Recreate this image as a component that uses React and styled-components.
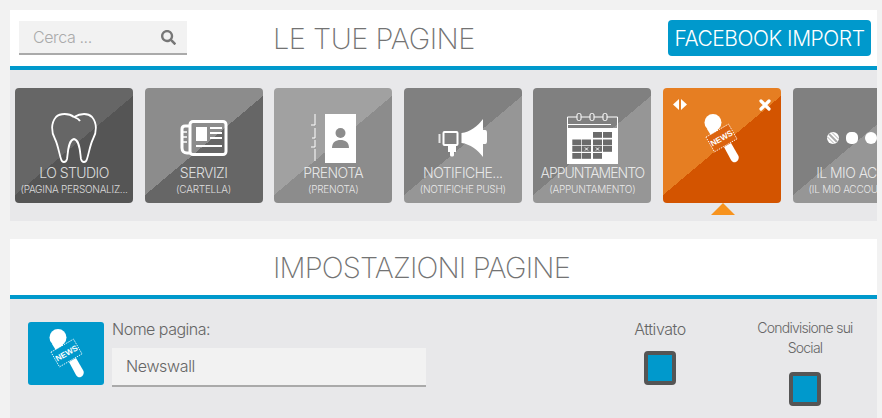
import React from "react";
import styled, { createGlobalStyle } from "styled-components";
import { FaSearch } from "react-icons/fa";

const GlobalStyle = createGlobalStyle`
    html, body {
        margin: 0;
        height: 418px;
        overflow: hidden;
        background: #f2f2f2;
        font-family: Inter, "Liberation Sans", sans-serif;
    }
`;

const Page = styled.div`
    display: flex;
    flex-direction: column;
    gap: 18px;
    padding: 10px 5px 0 10px;
`;
const Panel = styled.section`
    display: flex;
    flex-direction: column;
    min-width: 0;
`;
const Header = styled.header`
    display: flex;
    align-items: center;
    height: 56px;
    padding: 0 6px 0 ${(p) => p.$inset || 9}px;
    background: #fff;
    border-bottom: 4px solid #0099cc;
`;
const Title = styled.h1`
    margin: 0;
    font-size: 29px;
    font-weight: 200;
    letter-spacing: ${(p) => (p.$tight ? -0.85 : -0.5)}px;
    color: #737373;
    white-space: nowrap;
`;
const SearchBox = styled.div`
    display: flex;
    align-items: center;
    width: 143px;
    height: 32px;
    margin-right: 86px;
    padding: 0 11px 0 14px;
    background: #f2f2f2;
    border-bottom: 2px solid #aaa;
    color: #777;
`;
const SearchInput = styled.input`
    flex: 1;
    min-width: 0;
    border: 0;
    padding: 0;
    background: transparent;
    font: 300 16px Inter, "Liberation Sans", sans-serif;
    letter-spacing: -0.4px;
    &::placeholder {
        color: #aaa;
        opacity: 1;
    }
`;
const ImportButton = styled.button`
    margin-left: auto;
    width: 203px;
    height: 36px;
    padding: 0;
    border: 0;
    border-radius: 4px;
    background: #0099cc;
    color: #fff;
    font: 300 21px Inter, "Liberation Sans", sans-serif;
    letter-spacing: -0.45px;
    white-space: nowrap;
`;
const Strip = styled.div`
    display: flex;
    gap: 11.6px;
    height: 151px;
    box-sizing: border-box;
    padding: 18px 0 0 5px;
    background: #e8e8ea;
    overflow: hidden;
`;
const Tile = styled.div`
    position: relative;
    flex: 0 0 118px;
    height: 115px;
    display: flex;
    flex-direction: column;
    align-items: center;
    border-radius: 4px;
    background: linear-gradient(
        140deg,
        ${(p) => p.$from} 50%,
        ${(p) => p.$to} 50%
    );
    color: rgba(255, 255, 255, 0.8);
    white-space: nowrap;
    &::after {
        content: ${(p) => (p.$active ? '""' : "none")};
        position: absolute;
        left: 48px;
        top: 115px;
        border: solid transparent;
        border-width: 0 12px 12px;
        border-bottom-color: #f7931e;
    }
`;
const IconSlot = styled.div`
    height: 50px;
    margin-top: 25px;
    display: flex;
    align-items: center;
    justify-content: center;
    color: #fff;
`;
const TileName = styled.div`
    margin-top: 1px;
    font-size: 14px;
    font-weight: 300;
    line-height: 18px;
    letter-spacing: ${(p) => (p.$tight ? "-1" : "-0.55")}px;
`;
const TileSub = styled.div`
    font-size: 10px;
    font-weight: 300;
    line-height: 14px;
    letter-spacing: -0.25px;
`;
const TileAction = styled.span`
    position: absolute;
    top: 11px;
    ${(p) => p.$side}: 10px;
    display: flex;
    color: #fff;
`;
const Settings = styled.div`
    display: flex;
    align-items: flex-start;
    height: 119px;
    box-sizing: border-box;
    padding: 23px 12px 0 18px;
    background: #e8e8ea;
`;
const PageBadge = styled.div`
    flex: 0 0 76px;
    height: 63px;
    margin-right: 8px;
    display: flex;
    align-items: center;
    justify-content: center;
    border-radius: 3px;
    background: #0099cc;
    color: #fff;
`;
const NameField = styled.div`
    width: 314px;
    display: flex;
    flex-direction: column;
`;
const FieldLabel = styled.label`
    margin-top: -2px;
    font-size: 16px;
    font-weight: 300;
    line-height: 18px;
    letter-spacing: -0.5px;
    color: #666;
`;
const NameInput = styled.input`
    margin-top: 10px;
    height: 35px;
    box-sizing: content-box;
    padding: 0 14px 2px;
    width: 286px;
    border: 0;
    border-bottom: 2px solid #aaa;
    background: #f2f2f2;
    color: #666;
    font: 300 16px Inter, "Liberation Sans", sans-serif;
    letter-spacing: -0.35px;
`;
const Toggles = styled.div`
    margin-left: auto;
    display: flex;
    gap: 25px;
`;
const ToggleCol = styled.div`
    width: 120px;
    display: flex;
    flex-direction: column;
    align-items: center;
    text-align: center;
    font-weight: 300;
    line-height: 20px;
    color: #666;
`;
const ToggleText = styled.div`
    width: 110px;
    margin-top: ${(p) => (p.$wide ? -4 : -3)}px;
    font-size: ${(p) => (p.$wide ? 14 : 16)}px;
    letter-spacing: ${(p) => (p.$wide ? -0.75 : -0.45)}px;
`;
const Check = styled.div`
    width: 32px;
    height: 34px;
    margin-top: ${(p) => (p.$wide ? 14 : 12)}px;
    box-sizing: border-box;
    border: 4px solid #555;
    border-radius: 4px;
    background: #0099cc;
`;

const ToothIcon = () => (
    <svg width="46" height="50" viewBox="0 0 46 50" fill="none" stroke="currentColor" strokeWidth="1.8">
        <path d="M23 4C18 0 9 0 5 4C0 10 0 19 4 26C7 32 8 40 10 46C11 50 15 50 16 46C17 40 17 27 23 26C29 27 29 40 30 46C31 50 35 50 36 46C38 40 39 32 42 26C46 19 46 10 41 4C37 0 30 0 23 4C26 5 28 6 29 8" />
    </svg>
);

const PaperIcon = () => (
    <svg width="48" height="36" viewBox="0 0 48 36" fill="none" stroke="currentColor">
        <rect x="10" y="1.5" width="36" height="33" rx="3" strokeWidth="3" />
        <path d="M10 6H5C3 6 2 7 2 9V28C2 31 4 33 7 33H11" strokeWidth="3" />
        <path d="M3 12H7M3 17H7M3 22H7" strokeWidth="1.5" />
        <rect x="16" y="7" width="11" height="14" fill="currentColor" stroke="none" />
        <path d="M30 8H42M30 13H42M30 18H42" strokeWidth="2" />
        <path d="M16 26H42" strokeWidth="2" />
    </svg>
);

const BookIcon = () => (
    <svg width="46" height="50" viewBox="0 0 46 50" fill="none">
        <path d="M5 1V12H1M5 15V25H2M5 27V34H1M5 36V48" stroke="currentColor" strokeWidth="1" />
        <rect x="15" y="1" width="31" height="49" fill="currentColor" />
        <circle cx="30.5" cy="20" r="5" fill="#8c8c8c" />
        <path d="M22 35C22 29 26 27 30.5 27C35 27 39 29 39 35Z" fill="#8c8c8c" />
    </svg>
);

const MegaphoneIcon = () => (
    <svg width="50" height="40" viewBox="0 0 50 40" fill="none">
        <path d="M1.5 16V25" stroke="currentColor" strokeWidth="2" opacity="0.8" />
        <rect x="5.5" y="14" width="14" height="13" rx="1" stroke="currentColor" strokeWidth="2" />
        <path d="M10 28H18V34H16V37C16 39 12 39 12 37V34H10Z" fill="currentColor" />
        <path d="M23.5 15C32 14 40 8 45 1V39C40 32 32 26 23.5 25Z" fill="currentColor" />
        <path d="M45 12H47C49 12 49 14 49 16V22C49 24 49 26 47 26H45Z" fill="currentColor" />
    </svg>
);

const CalendarIcon = () => {
    const columns = [5.3, 15, 26, 36];
    const rows = [
        [19, [2, 3]],
        [26.5, [0, 1, 2, 3]],
        [33, [0, 1, 2, 3]],
        [40, [0, 1, 2]],
    ];
    return (
        <svg width="51" height="51" viewBox="0 0 51 51" fill="none">
            <path d="M0.5 15V4H50.5V15" stroke="currentColor" />
            <path d="M1 11.5H44" stroke="currentColor" />
            <rect x="0" y="15" width="51" height="36" fill="currentColor" />
            {[10, 23, 36].map((x) => (
                <rect key={x} x={x} y="0.5" width="4" height="7" rx="1.5" fill="#808080" stroke="currentColor" />
            ))}
            {rows.map(([y, cols]) =>
                cols.map((c) => (
                    <rect key={`${y}-${c}`} x={columns[c]} y={y} width="9" height="5.8" fill="#6b6b6b" />
                ))
            )}
            <path d="M18 34.5L21 37.5M21 34.5L18 37.5M29 34.5L32 37.5M32 34.5L29 37.5" stroke="#fff" strokeWidth="1" />
        </svg>
    );
};

const MicIcon = ({ bg }) => (
    <svg width="35" height="49" viewBox="0 0 35 49">
        <circle cx="9" cy="8.5" r="8.5" fill="currentColor" />
        <path d="M3 15L14 14L13 22L8 23Z" fill="currentColor" />
        <path d="M20 33L27 29L34.5 42C36 47 30 51 27 46Z" fill="currentColor" />
        <g transform="rotate(-30 17.5 24)">
            <rect x="4.5" y="15.5" width="26" height="17" fill={bg} stroke="currentColor" strokeWidth="0.8" strokeDasharray="1.5 1" />
            <text x="17.5" y="27" textAnchor="middle" fontSize="8" fontWeight="700" fill="currentColor" fontFamily="Liberation Sans, sans-serif">NEWS</text>
        </g>
    </svg>
);

const DotsIcon = () => (
    <svg width="50" height="14" viewBox="0 0 50 14">
        <circle cx="6" cy="7" r="6" fill="currentColor" />
        <path d="M2 3L10 11" stroke="#aaa" strokeWidth="2" />
        <path d="M0.5 6L7 12.5M5 1.5L11.5 8" stroke="#aaa" strokeWidth="1" />
        <rect x="19" y="1" width="12" height="12" rx="5" fill="currentColor" />
        <circle cx="44" cy="7" r="6" fill="currentColor" />
    </svg>
);

const ArrowsIcon = () => (
    <svg width="14" height="11" viewBox="0 0 14 11" fill="currentColor">
        <path d="M6 0V11L0 5.5Z" />
        <path d="M8 0V11L14 5.5Z" />
    </svg>
);

const CloseIcon = () => (
    <svg width="12" height="12" viewBox="0 0 12 12" stroke="currentColor" strokeWidth="3.2" strokeLinecap="round">
        <path d="M2 2L10 10M10 2L2 10" />
    </svg>
);

const tiles = [
    { name: "LO STUDIO", sub: "(PAGINA PERSONALIZ...", from: "#666", to: "#555", icon: <ToothIcon /> },
    { name: "SERVIZI", sub: "(CARTELLA)", from: "#8c8c8c", to: "#666", icon: <PaperIcon /> },
    { name: "PRENOTA", sub: "(PRENOTA)", from: "#a1a1a1", to: "#8c8c8c", icon: <BookIcon /> },
    { name: "NOTIFICHE...", sub: "(NOTIFICHE PUSH)", from: "#808080", to: "#969696", icon: <MegaphoneIcon /> },
    { name: "APPUNTAMENTO", sub: "(APPUNTAMENTO)", tight: true, from: "#808080", to: "#969696", icon: <CalendarIcon /> },
    { from: "#e67e22", to: "#d35400", active: true, icon: <MicIcon bg="#dc6410" /> },
    { name: "IL MIO AC...", sub: "(IL MIO ACCOUNT)", from: "#808080", to: "#969696", icon: <DotsIcon /> },
];

const App = () => {
    return (
        <Page>
            <GlobalStyle />
            <Panel>
                <Header>
                    <SearchBox>
                        <SearchInput placeholder="Cerca ..." />
                        <FaSearch size={15} />
                    </SearchBox>
                    <Title>LE TUE PAGINE</Title>
                    <ImportButton>FACEBOOK IMPORT</ImportButton>
                </Header>
                <Strip>
                    {tiles.map((tile, i) => (
                        <Tile key={i} $from={tile.from} $to={tile.to} $active={tile.active}>
                            {tile.active && (
                                <>
                                    <TileAction $side="left"><ArrowsIcon /></TileAction>
                                    <TileAction $side="right"><CloseIcon /></TileAction>
                                </>
                            )}
                            <IconSlot>{tile.icon}</IconSlot>
                            {tile.name && <TileName $tight={tile.tight}>{tile.name}</TileName>}
                            {tile.sub && <TileSub>{tile.sub}</TileSub>}
                        </Tile>
                    ))}
                </Strip>
            </Panel>
            <Panel>
                <Header $inset={263}>
                    <Title $tight>IMPOSTAZIONI PAGINE</Title>
                </Header>
                <Settings>
                    <PageBadge><MicIcon bg="#0099cc" /></PageBadge>
                    <NameField>
                        <FieldLabel>Nome pagina:</FieldLabel>
                        <NameInput defaultValue="Newswall" />
                    </NameField>
                    <Toggles>
                        <ToggleCol>
                            <ToggleText>Attivato</ToggleText>
                            <Check />
                        </ToggleCol>
                        <ToggleCol>
                            <ToggleText $wide>Condivisione sui Social</ToggleText>
                            <Check $wide />
                        </ToggleCol>
                    </Toggles>
                </Settings>
            </Panel>
        </Page>
    );
};

export default App;
